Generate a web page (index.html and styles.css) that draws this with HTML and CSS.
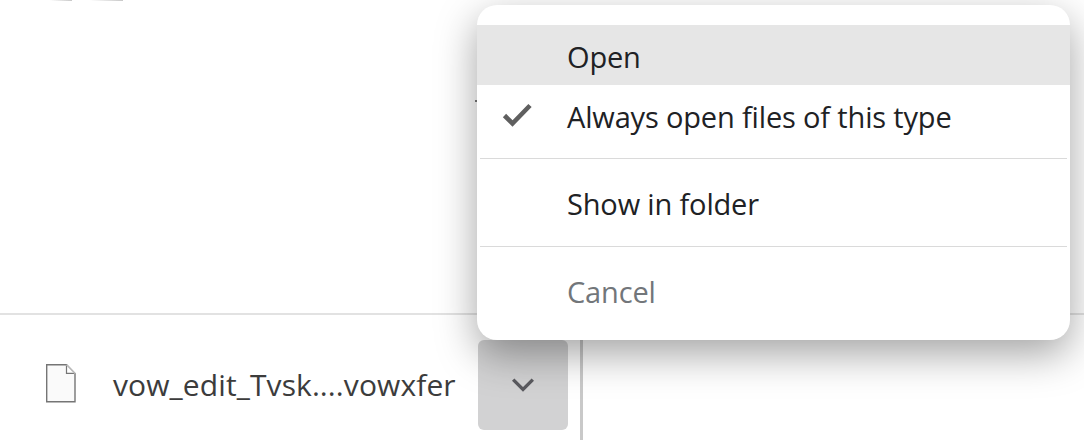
FILE: index.html
```html
<!DOCTYPE html>
<html lang="en">
<head>
<meta charset="utf-8">
<title>Download menu</title>
<link rel="stylesheet" href="styles.css">
</head>
<body>
<div class="page">
  <div class="content">
    <div class="remnants"><span class="mark mark-a"></span><span class="mark mark-b"></span></div>
    <span class="dot"></span>
  </div>
  <div class="shelf">
    <div class="item">
      <svg class="file-icon" width="30" height="39" viewBox="0 0 30 39" aria-hidden="true">
        <path d="M.7.7H20.5L29 9.5V37.7H.7Z" fill="#fafafa" stroke="#757575" stroke-width="1.4"/>
        <path d="M20.5 1L28.5 9.3H20.5Z" fill="#fff"/>
        <path d="M20.5.7V9.3H29" fill="none" stroke="#757575" stroke-width="1.2"/>
        <path d="M20.5.7L29 9.5" fill="none" stroke="#bdbdbd" stroke-width="1.4"/>
      </svg>
      <span class="file-name">vow_edit_Tvsk....vowxfer</span>
      <button class="caret" type="button" aria-label="More">
        <svg width="24" height="18" viewBox="0 0 24 18" aria-hidden="true"><path d="M2.2 3.6L12 13.4L21.8 3.6" fill="none" stroke="#5a5a5f" stroke-width="3.4"/></svg>
      </button>
    </div>
    <div class="divider"></div>
  </div>
  <div class="menu">
    <div class="row hover"><span class="check"></span><span class="label">Open</span></div>
    <div class="row"><span class="check"><svg width="30" height="26" viewBox="0 0 30 26" aria-hidden="true"><path d="M2.5 13.5L10.5 21.5L28 3.5" fill="none" stroke="#5f5f5f" stroke-width="4.6"/></svg></span><span class="label">Always open files of this type</span></div>
    <div class="sep"></div>
    <div class="row tight"><span class="check"></span><span class="label">Show in folder</span></div>
    <div class="sep"></div>
    <div class="row tight muted"><span class="check"></span><span class="label">Cancel</span></div>
  </div>
</div>
</body>
</html>
```
FILE: styles.css
```css
* { box-sizing: border-box; }
html, body { margin: 0; height: 100%; background: #fff; overflow: hidden; }
body { font-family: "Open Sans", "Noto Sans", sans-serif; }
.page { position: relative; width: 1084px; height: 447px; display: flex; flex-direction: column; }
.content { position: relative; height: 313px; }
.remnants { display: flex; gap: 18px; padding-left: 50px; }
.mark { height: 1px; background: linear-gradient(90deg, #fff, #c8c8c8); }
.mark-a { width: 22px; }
.mark-b { width: 33px; }
.dot { position: absolute; left: 475px; top: 100px; width: 2px; height: 2px; background: #777; }
.shelf { display: flex; height: 127px; border-top: 2px solid #e2e2e2; padding-top: 25px; }
.item { display: flex; align-items: flex-start; width: 568px; height: 100px; }
.file-icon { display: block; margin: 24px 0 0 46px; flex: none; }
.file-name { margin: 25px 0 0 37px; width: 345px; font-size: 30px; line-height: 40px; color: #3c3c3c; white-space: nowrap; flex: none; letter-spacing: 0.1px; }
.caret { margin: 0 0 0 auto; padding: 0; border: 0; width: 90px; height: 90px; border-radius: 6px; background: #d2d2d3; display: flex; align-items: center; justify-content: center; flex: none; }
.divider { width: 3px; height: 100px; margin-left: 12px; background: #c9c9c9; }
.menu { position: absolute; left: 477px; top: 5px; width: 593px; height: 335px; padding-top: 20px; background: #fff; border-radius: 20px; box-shadow: 0 14px 40px rgba(0, 0, 0, .36); }
.row { display: flex; align-items: center; height: 60px; padding-top: 2px; font-size: 29px; letter-spacing: -0.16px; color: #202124; }
.row.tight { padding-top: 0; }
.row.hover { background: #e6e6e6; }
.row.muted { color: #72767a; }
.check { width: 90px; flex: none; display: flex; justify-content: center; padding-right: 10px; }
.check svg { display: block; margin-top: -2px; }
.label { white-space: nowrap; }
.sep { height: 1px; margin: 13px 3px 14px; background: #dadada; }
```
